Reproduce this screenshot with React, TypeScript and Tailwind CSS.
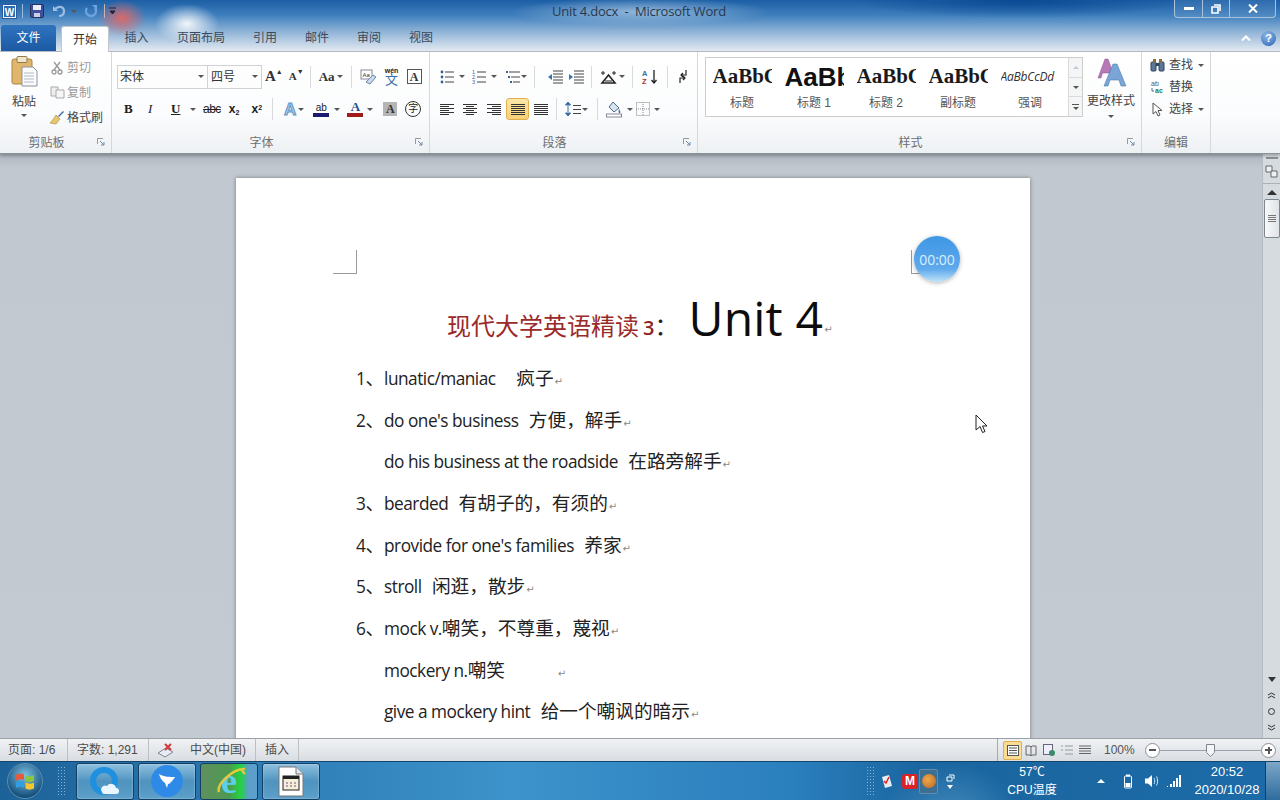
import React from "react";

const cjk = "font-['Liberation_Sans','Noto_Sans_CJK_SC',sans-serif]";

function Caret({ className = "" }: { className?: string }) {
  return <span className={"inline-block w-0 h-0 border-x-[3px] border-x-transparent border-t-[3px] border-t-[#555] " + className} />;
}

function Sep({ className = "" }: { className?: string }) {
  return <span className={"inline-block w-px h-[22px] bg-[#d8dade] " + className} />;
}

function Lines({ kind }: { kind: "l" | "c" | "r" | "j" | "d" }) {
  const rows = [0, 1, 2, 3, 4, 5];
  return (
    <svg width="16" height="13" viewBox="0 0 16 13">
      {rows.map((i) => {
        const short = i % 2 === 1;
        let x1 = 1, x2 = 15;
        if (short && kind === "l") x2 = 10;
        if (short && kind === "c") { x1 = 4; x2 = 12; }
        if (short && kind === "r") x1 = 6;
        return <line key={i} x1={x1} x2={x2} y1={i * 2 + 1.5} y2={i * 2 + 1.5} stroke="#333" strokeWidth="1" />;
      })}
    </svg>
  );
}

function List({ kind }: { kind: "b" | "n" | "m" }) {
  return (
    <svg width="14" height="14" viewBox="0 0 14 14">
      {[2, 7, 12].map((y, i) => (
        <g key={y}>
          {kind === "b" && <circle cx="2" cy={y} r="1.4" fill="#3b5f8f" />}
          {kind === "n" && <text x="0" y={y + 2} fontSize="5.5" fill="#3b5f8f" fontFamily="Liberation Sans">{i + 1}</text>}
          {kind === "m" && <rect x={i * 2} y={y - 1} width="2" height="2" fill="#3b5f8f" />}
          <line x1={kind === "m" ? 3 + i * 2 : 5} x2="14" y1={y} y2={y} stroke="#444" />
        </g>
      ))}
    </svg>
  );
}

function Indent({ flip }: { flip?: boolean }) {
  return (
    <svg width="16" height="14" viewBox="0 0 16 14">
      {[1, 4, 7, 10, 13].map((y) => <line key={y} x1="6" x2="16" y1={y} y2={y} stroke="#444" />)}
      <path d={flip ? "M1 4l4 3-4 3z" : "M5 4l-4 3 4 3z"} fill="#3b72b0" />
    </svg>
  );
}

function Group({ label, w, launcher, children }: { label: string; w: string; launcher?: boolean; children: React.ReactNode }) {
  return (
    <div className={"relative h-full flex flex-col border-r border-[#d5d8dd] " + w}>
      <div className="h-[81px] shrink-0">{children}</div>
      <div className={"flex-1 flex items-center justify-center text-[12px] text-[#6e6e6e] " + (launcher ? "pr-[18px]" : "")}>{label}</div>
      {launcher && (
        <svg className="absolute right-[5px] bottom-[6px]" width="9" height="9" viewBox="0 0 9 9">
          <path d="M0.5 6V0.5H6" fill="none" stroke="#999" />
          <path d="M3 3l4 4M7 4v3H4" fill="none" stroke="#6d8aa8" />
        </svg>
      )}
    </div>
  );
}

function Style({ text, label, cls }: { text: string; label: string; cls: string }) {
  return (
    <div className="w-[72px] flex flex-col items-center overflow-hidden">
      <div className="h-[36px] w-[59px] overflow-hidden flex items-center justify-start whitespace-nowrap">
        <span className={cls}>{text}</span>
      </div>
      <div className="text-[12px] text-[#555] leading-[16px]">{label}</div>
    </div>
  );
}

function EditRow({ icon, label, caret }: { icon: React.ReactNode; label: string; caret?: boolean }) {
  return (
    <div className="h-[22px] flex items-center text-[12px] text-[#444]">
      <span className="w-[17px] flex justify-center mr-[3px]">{icon}</span>
      <span>{label}</span>
      {caret && <Caret className="ml-[5px]" />}
    </div>
  );
}

function ClipRow({ icon, label, dim }: { icon: React.ReactNode; label: string; dim?: boolean }) {
  return (
    <div className={"h-[25px] flex items-center text-[12px] " + (dim ? "text-[#9a9a9a]" : "text-[#444]")}>
      <span className="w-[18px] flex justify-center mr-[1px]">{icon}</span>
      <span>{label}</span>
    </div>
  );
}

function Ret() {
  return <span className="text-[10px] text-[#888] ml-[1px] font-['DejaVu_Sans']">↵</span>;
}

function Row({ children, indent }: { children: React.ReactNode; indent?: boolean }) {
  return (
    <div className={"h-[41.67px] leading-[41.67px] whitespace-pre text-[18.67px] text-[#222] " + (indent ? "pl-[148px]" : "pl-[120px]")}>
      {children}
    </div>
  );
}

function E({ children }: { children: React.ReactNode }) {
  return <span className="text-[17.25px] font-['Open_Sans','Noto_Sans',sans-serif] tracking-[-0.5px]">{children}</span>;
}

function TaskBtn({ children }: { children: React.ReactNode }) {
  return (
    <div className="w-[58px] h-[37px] mr-[4px] rounded-[3px] border border-[#123f63] bg-[linear-gradient(180deg,#8ec0df,#4f93bf_50%,#5b9fca)] flex items-center justify-center shadow-[inset_0_0_2px_#ffffff99]">
      {children}
    </div>
  );
}

function Dots() {
  return <div className="w-[9px] h-[31px] bg-[radial-gradient(circle,#9fc3dc_1px,transparent_1px)] bg-[length:3px_3px] opacity-80" />;
}

export default function App() {
  return (
    <div className={"w-[1280px] h-[800px] overflow-hidden flex flex-col relative bg-[#c0c8d0] " + cjk}>
      {/* title + tabs */}
      <div className="h-[52px] shrink-0 flex flex-col border-b border-[#b8bcc2] bg-[radial-gradient(ellipse_24px_18px_at_122px_18px,#d9696a,transparent),radial-gradient(ellipse_32px_20px_at_187px_24px,#f2f6fa,transparent),radial-gradient(ellipse_130px_14px_at_640px_12px,#a8c5e2cc,transparent),radial-gradient(ellipse_170px_18px_at_1020px_0px,#0a4a94,transparent),linear-gradient(180deg,#1d5fa6_0%,#3f7fbd_30%,#8fb3d6_62%,#e3e9f1_100%)]">
        <div className="h-[25px] flex items-start relative">
          <div className="flex items-center h-[22px] pl-[2px]">
            <svg width="15" height="15" viewBox="0 0 15 15">
              <rect x="0.5" y="0.5" width="14" height="14" fill="#eef4fb" stroke="#2b5d9c" />
              <rect x="2" y="2" width="11" height="11" fill="#2b6cb5" />
              <text x="7.5" y="11.5" textAnchor="middle" fontSize="10" fontWeight="700" fill="#fff" fontFamily="Liberation Sans">W</text>
            </svg>
            <span className="w-px h-[14px] bg-[#9fbad6] ml-[5px]" />
            <svg className="ml-[7px]" width="14" height="14" viewBox="0 0 14 14">
              <rect x="0.5" y="0.5" width="13" height="13" rx="1" fill="#3f4f9c" stroke="#26305f" />
              <rect x="3" y="1" width="8" height="5" fill="#e8eefa" />
              <rect x="4" y="9" width="6" height="4" fill="#c9d0e4" />
            </svg>
            <svg className="ml-[8px]" width="14" height="14" viewBox="0 0 14 14">
              <path d="M3 5c4-4 9-2 9 2s-3 5-5 5" fill="none" stroke="#9dbde3" strokeWidth="2.2" />
              <path d="M1 2v5h5z" fill="#9dbde3" />
            </svg>
            <Caret className="ml-[5px] border-t-[#223]" />
            <svg className="ml-[7px]" width="14" height="14" viewBox="0 0 14 14">
              <path d="M3 4a5 5 0 1 0 8 0" fill="none" stroke="#6ea3e2" strokeWidth="2.4" />
              <path d="M8 1h5v5z" fill="#6ea3e2" />
            </svg>
            <span className="w-px h-[14px] bg-[#c7b5b5] ml-[6px]" />
            <svg className="ml-[4px]" width="7" height="8" viewBox="0 0 7 8"><path d="M0 1h7M1 4h5l-2.500 3z" stroke="#223" fill="#223" /></svg>
          </div>
          <div className="absolute left-[552px] top-[3px] text-[13px] leading-[17px] text-[#27384d] font-['Open_Sans',sans-serif] whitespace-pre tracking-[-0.2px]">Unit 4.docx  -  Microsoft Word</div>
          <div className="ml-auto mr-[4px] w-[102px] h-[18px] flex border border-t-0 border-[#a9c3dc] rounded-b-[4px] bg-[#ffffff14]">
            <div className="w-[28px] flex items-center justify-center border-r border-[#a9c3dc]"><span className="w-[10px] h-[3px] bg-white" /></div>
            <div className="w-[27px] flex items-center justify-center border-r border-[#a9c3dc]">
              <svg width="10" height="10" viewBox="0 0 10 10"><path d="M3 1h6v6M1 3h6v6H1z" fill="none" stroke="#fff" strokeWidth="1.600" /></svg>
            </div>
            <div className="flex-1 flex items-center justify-center">
              <svg width="10" height="9" viewBox="0 0 10 9"><path d="M1 0.500l8 8M9 0.500l-8 8" stroke="#fff" strokeWidth="2" /></svg>
            </div>
          </div>
        </div>
        <div className="h-[26px] flex items-end relative text-[12px]">
          <div className="ml-[1px] w-[55px] h-[26px] rounded-t-[3px] bg-[linear-gradient(180deg,#2f73bf,#1c5aa3)] text-white flex items-center justify-center">文件</div>
          <div className="ml-[5px] w-[48px] h-[26px] relative top-[1px] z-10 rounded-t-[3px] bg-white border border-b-0 border-[#c3c7cd] text-[#333] flex items-center justify-center">开始</div>
          <div className="w-[55px] h-[26px] flex items-center justify-center text-[#3a4a5c]">插入</div>
          <div className="w-[74px] h-[26px] flex items-center justify-center text-[#3a4a5c]">页面布局</div>
          <div className="w-[54px] h-[26px] flex items-center justify-center text-[#3a4a5c]">引用</div>
          <div className="w-[50px] h-[26px] flex items-center justify-center text-[#3a4a5c]">邮件</div>
          <div className="w-[54px] h-[26px] flex items-center justify-center text-[#3a4a5c]">审阅</div>
          <div className="w-[50px] h-[26px] flex items-center justify-center text-[#3a4a5c]">视图</div>
          <div className="ml-auto mr-[4px] h-[26px] flex items-center">
            <svg width="10" height="7" viewBox="0 0 10 7"><path d="M1 5.500l4-4 4 4" fill="none" stroke="#fff" strokeWidth="2" /></svg>
            <span className="ml-[10px] w-[15px] h-[15px] rounded-full bg-[radial-gradient(circle_at_40%_30%,#8db8ea,#2a63b0)] text-white text-[11px] font-bold flex items-center justify-center leading-none">?</span>
          </div>
        </div>
      </div>

      {/* ribbon */}
      <div className="h-[102px] shrink-0 flex bg-[linear-gradient(180deg,#ffffff,#fbfcfd_62%,#eef1f4_100%)] border-b border-[#8d9299] shadow-[0_2px_3px_#00000040] relative z-10">
        <Group label="剪贴板" w="w-[112px]" launcher>
          <div className="flex h-full">
            <div className="w-[48px] flex flex-col items-center pt-[4px]">
              <svg width="27" height="31" viewBox="0 0 27 31">
                <rect x="1" y="3" width="20" height="25" rx="2" fill="#e0b66c" stroke="#a9843f" />
                <rect x="6" y="0.500" width="10" height="6" rx="1" fill="#f0e6cc" stroke="#8f7a4a" />
                <path d="M11 11h11l4 4v15H11z" fill="#fafbfc" stroke="#8d939b" />
                <path d="M13 17h10M13 20h10M13 23h10M13 26h10" stroke="#b5bac2" />
              </svg>
              <div className="text-[12px] text-[#444] mt-[7px] leading-[16px]">粘贴</div>
              <Caret className="mt-[4px]" />
            </div>
            <div className="pt-[3px]">
              <ClipRow dim label="剪切" icon={<svg width="12" height="14" viewBox="0 0 12 14"><path d="M3 1l6 8M9 1L3 9" stroke="#999" strokeWidth="1.300" /><circle cx="3" cy="11" r="2" fill="none" stroke="#999" strokeWidth="1.300" /><circle cx="9" cy="11" r="2" fill="none" stroke="#999" strokeWidth="1.300" /></svg>} />
              <ClipRow dim label="复制" icon={<svg width="15" height="13" viewBox="0 0 15 13"><path d="M1 1h7v9H1z" fill="#eee" stroke="#aaa" /><path d="M6 4h8v8H6z" fill="#f6f6f6" stroke="#aaa" /></svg>} />
              <ClipRow label="格式刷" icon={<svg width="16" height="15" viewBox="0 0 16 15"><path d="M9 6l5-5 1 1-5 5z" fill="#3a6ea5" /><path d="M7 5l4 4-4 5-6-1c2-2 4-5 6-8z" fill="#e8c66a" stroke="#a88a3e" strokeWidth="0.600" /></svg>} />
            </div>
          </div>
        </Group>

        <Group label="字体" w="w-[318px]" launcher>
          <div className="pl-[5px] pt-[12px] flex flex-col">
            <div className="h-[25px] flex items-center">
              <div className="w-[91px] h-[24px] border border-[#cfd3d8] bg-[#fdfdfd] flex items-center text-[12px] text-[#333] pl-[2px]">宋体<Caret className="ml-auto mr-[3px]" /></div>
              <div className="w-[54px] h-[24px] border border-l-0 border-[#cfd3d8] bg-[#fdfdfd] flex items-center text-[12px] text-[#333] pl-[3px]">四号<Caret className="ml-auto mr-[3px]" /></div>
              <span className="ml-[3px] text-[15px] font-bold font-['Liberation_Serif'] text-[#333]">A</span>
              <span className="text-[7px] text-[#333] -mt-[8px]">▲</span>
              <span className="ml-[6px] text-[11px] font-bold font-['Liberation_Serif'] text-[#333]">A</span>
              <span className="text-[7px] text-[#333] -mt-[8px]">▼</span>
              <Sep className="ml-[6px]" />
              <span className="ml-[8px] text-[13px] font-bold font-['Liberation_Serif'] text-[#333]">Aa</span>
              <Caret className="ml-[2px]" />
              <Sep className="ml-[8px]" />
              <svg className="ml-[8px]" width="17" height="16" viewBox="0 0 17 16"><rect x="1" y="1" width="11" height="9" fill="#fff" stroke="#889" /><text x="2.500" y="8" fontSize="6" fill="#333" fontFamily="Liberation Sans">Aa</text><path d="M6 13l7-7 3 2-6 7z" fill="#c9d9ea" stroke="#6d8aa8" /></svg>
              <span className="ml-[7px] w-[16px] flex flex-col items-center relative">
                <span className="text-[7px] leading-[7px] text-[#222] font-bold">wén</span>
                <span className="text-[13px] leading-[12px] text-[#3a6ea5]">文</span>
              </span>
              <span className="ml-[7px] w-[15px] h-[15px] border border-[#555] text-[12px] font-bold font-['Liberation_Serif'] text-[#333] flex items-center justify-center leading-none">A</span>
            </div>
            <div className="h-[24px] mt-[8px] flex items-center text-[#222]">
              <span className="ml-[7px] w-[10px] text-[13px] font-bold font-['Liberation_Serif']">B</span>
              <span className="ml-[14px] w-[10px] text-[13px] italic font-['Liberation_Serif']">I</span>
              <span className="ml-[13px] w-[10px] text-[13px] font-bold underline font-['Liberation_Serif']">U</span>
              <Caret className="ml-[9px]" />
              <span className="ml-[7px] text-[12px] line-through font-['Liberation_Sans'] tracking-[-0.5px]">abc</span>
              <span className="ml-[8px] text-[12px] font-bold">x<sub className="text-[7px]">2</sub></span>
              <span className="ml-[12px] text-[12px] font-bold">x<sup className="text-[7px]">2</sup></span>
              <Sep className="ml-[10px]" />
              <span className="ml-[11px] text-[17px] font-bold text-[#a9cdea] [-webkit-text-stroke:1px_#5e97cb] font-['Liberation_Sans'] leading-none">A</span>
              <Caret className="ml-[2px]" />
              <span className="ml-[9px] w-[16px] flex flex-col items-center text-[10px] leading-[11px] text-[#222]">ab<span className="w-[16px] h-[4px] bg-[#1a1a6e]" /></span>
              <Caret className="ml-[5px]" />
              <span className="ml-[7px] w-[16px] flex flex-col items-center text-[13px] font-bold font-['Liberation_Serif'] leading-[12px] text-[#2b4f8f]">A<span className="w-[16px] h-[4px] bg-[#a01c1c]" /></span>
              <Caret className="ml-[4px]" />
              <span className="ml-[10px] w-[14px] h-[14px] bg-[#b5b5b5] flex items-center justify-center text-[12px] font-bold font-['Liberation_Serif'] text-[#333]">A</span>
              <span className="ml-[8px] w-[16px] h-[16px] rounded-full border border-[#333] text-[10px] flex items-center justify-center leading-none">字</span>
            </div>
          </div>
        </Group>

        <Group label="段落" w="w-[268px]" launcher>
          <div className="pl-[10px] pt-[16px] flex flex-col">
            <div className="h-[17px] flex items-center">
              <List kind="b" /><Caret className="ml-[5px]" />
              <span className="ml-[7px]"><List kind="n" /></span><Caret className="ml-[5px]" />
              <span className="ml-[9px]"><List kind="m" /></span><Caret className="ml-[1px]" />
              <Sep className="ml-[7px]" />
              <span className="ml-[12px]"><Indent /></span>
              <span className="ml-[5px]"><Indent flip /></span>
              <Sep className="ml-[7px]" />
              <svg className="ml-[8px]" width="17" height="14" viewBox="0 0 17 14"><path d="M2 13L8.500 5l6.500 8z" fill="none" stroke="#222" strokeWidth="1.600" /><path d="M1 3h4M12 3h4M3 1v4M14 1v4M5 11h7" stroke="#222" /></svg>
              <Caret className="ml-[2px]" />
              <Sep className="ml-[7px]" />
              <svg className="ml-[9px]" width="16" height="16" viewBox="0 0 16 16"><text x="0" y="7" fontSize="7.500" fontWeight="700" fill="#3a6ea5" fontFamily="Liberation Sans">A</text><text x="0" y="15" fontSize="7.500" fontWeight="700" fill="#b03030" fontFamily="Liberation Sans">Z</text><path d="M12 1v13M9.500 11l2.500 3 2.500-3" fill="none" stroke="#222" strokeWidth="1.300" /></svg>
              <Sep className="ml-[9px]" />
              <svg className="ml-[9px]" width="12" height="15" viewBox="0 0 12 15"><path d="M9 1v5H4M6 4L4 6l2 2" fill="none" stroke="#222" strokeWidth="1.200" /><path d="M3 14V9h5M6 7l2 2-2 2" fill="none" stroke="#222" strokeWidth="1.200" /></svg>
            </div>
            <div className="h-[22px] mt-[13px] flex items-center">
              <span className="-ml-[1px]"><Lines kind="l" /></span>
              <span className="ml-[7px]"><Lines kind="c" /></span>
              <span className="ml-[8px]"><Lines kind="r" /></span>
              <span className="ml-[4px] w-[23px] h-[22px] rounded-[3px] border border-[#e0b050] bg-[linear-gradient(180deg,#fde7a8,#f8cf74)] flex items-center justify-center"><Lines kind="j" /></span>
              <span className="ml-[4px] flex flex-col items-center"><Lines kind="d" /></span>
              <Sep className="ml-[7px]" />
              <svg className="ml-[7px]" width="8" height="16" viewBox="0 0 8 16"><path d="M4 5v6M1.500 4L4 1l2.500 3zM1.500 12L4 15l2.500-3z" fill="#3a6ea5" stroke="#3a6ea5" /></svg>
              <svg className="ml-[1px]" width="8" height="11" viewBox="0 0 8 11"><path d="M0 1.500h8M0 5.500h8M0 9.500h8" stroke="#444" /></svg>
              <Caret className="ml-[1px]" />
              <Sep className="ml-[9px]" />
              <svg className="ml-[8px]" width="17" height="17" viewBox="0 0 17 17"><path d="M7 1l6 6-5 4-5-5z" fill="#d8e4f0" stroke="#4a6a8f" /><path d="M13 8c1 2 2 3 1 4s-2-1-1-4z" fill="#3a6ea5" /><rect x="0.500" y="13" width="15" height="3" fill="#fff" stroke="#889" /></svg>
              <Caret className="ml-[4px]" />
              <svg className="ml-[3px]" width="14" height="14" viewBox="0 0 14 14"><rect x="0.500" y="0.500" width="13" height="13" fill="none" stroke="#888" strokeDasharray="1 1" /><path d="M7 0v14M0 7h14" stroke="#888" strokeDasharray="1 1" /></svg>
              <Caret className="ml-[4px]" />
            </div>
          </div>
        </Group>

        <Group label="样式" w="w-[444px]" launcher>
          <div className="pl-[7px] pt-[5px] flex">
            <div className="w-[378px] h-[60px] border border-[#cfcdca] bg-white flex">
              <div className="flex-1 flex pt-[1px]">
                <Style text="AaBbCc" label="标题" cls="text-[21px] font-bold font-['Liberation_Serif'] text-[#1a1a1a]" />
                <Style text="AaBbC" label="标题 1" cls="text-[26px] font-bold font-['Liberation_Sans'] text-[#111]" />
                <Style text="AaBbCc" label="标题 2" cls="text-[21px] font-bold font-['Liberation_Serif'] text-[#1a1a1a]" />
                <Style text="AaBbCc" label="副标题" cls="text-[21px] font-bold font-['Liberation_Serif'] text-[#1a1a1a]" />
                <Style text="AaBbCcDd" label="强调" cls="text-[12px] italic text-[#333] font-['Open_Sans'] tracking-[-0.2px]" />
              </div>
              <div className="w-[14px] flex flex-col border-l border-[#d8dade] bg-[#f4f5f7]">
                <div className="h-[20px] border-b border-[#d8dade] flex items-center justify-center"><span className="w-0 h-0 border-x-[3px] border-x-transparent border-b-[3px] border-b-[#c5c8cc]" /></div>
                <div className="h-[19px] border-b border-[#d8dade] flex items-center justify-center"><Caret /></div>
                <div className="flex-1 flex flex-col gap-[2px] items-center justify-center"><span className="w-[7px] h-px bg-[#555]" /><Caret /></div>
              </div>
            </div>
            <div className="w-[58px] flex flex-col items-center ml-[-1px]">
              <svg width="32" height="31" viewBox="0 0 32 31">
                <path d="M3 21L10 2h3l7 19h-4l-1.500-5h-7L6 21z" fill="#b778b8" stroke="#8d4f90" strokeWidth="0.500" />
                <path d="M9 29L18 7h4l9 22h-5l-2-6h-9l-2 6z" fill="#7aa5d6" stroke="#3f6ea5" strokeWidth="0.500" />
              </svg>
              <div className="text-[12px] text-[#444] mt-[5px] leading-[16px] whitespace-nowrap">更改样式</div>
              <Caret className="mt-[6px]" />
            </div>
          </div>
        </Group>

        <Group label="编辑" w="w-[69px]">
          <div className="pl-[7px] pt-[2px]">
            <EditRow label="查找" caret icon={<svg width="15" height="14" viewBox="0 0 15 14"><rect x="1" y="4" width="5" height="9" rx="1" fill="#5b7896" stroke="#2d4560" /><rect x="9" y="4" width="5" height="9" rx="1" fill="#5b7896" stroke="#2d4560" /><rect x="3" y="1" width="3" height="4" fill="#8b6b3a" /><rect x="9" y="1" width="3" height="4" fill="#8b6b3a" /><rect x="6" y="5" width="3" height="3" fill="#2d4560" /></svg>} />
            <EditRow label="替换" icon={<svg width="15" height="14" viewBox="0 0 15 14"><text x="1" y="6" fontSize="7" fill="#555" fontFamily="Liberation Sans">ab</text><text x="5" y="13" fontSize="7" fontWeight="700" fill="#2f7a4a" fontFamily="Liberation Sans">ac</text><path d="M2 8v3h2" fill="none" stroke="#3a6ea5" /></svg>} />
            <EditRow label="选择" caret icon={<svg width="11" height="15" viewBox="0 0 11 15"><path d="M1 1v11l3-2.500 2 4.500 2-1-2-4.500h4z" fill="#fff" stroke="#555" /></svg>} />
          </div>
        </Group>
      </div>

      {/* document */}
      <div className="flex-1 min-h-0 flex bg-[linear-gradient(180deg,#aeb6bf_0,#c1c8cf_14px,#c3cad1_100%)]">
        <div className="flex-1 pt-[24px] pl-[236px] overflow-hidden">
          <div className="w-[794px] h-[700px] bg-white shadow-[0_0_4px_#00000066] flex flex-col">
            <div className="pt-[72px] px-[97px] flex justify-between">
              <div className="w-[24px] h-[24px] border-r border-b border-[#9a9a9a]" />
              <div className="w-[24px] h-[24px] border-l border-b border-[#9a9a9a] mr-[-2px]" />
            </div>
            <div className="h-[63px] mt-[9px] pl-[211px] flex items-end whitespace-pre">
              <span className="text-[24px] text-[#9b2a2a] leading-[38px]">现代大学英语精读</span>
              <span className="text-[20px] font-semibold text-[#8f2323] leading-[36px] ml-[4px] font-['Open_Sans']">3</span>
              <span className="text-[24px] text-[#222] leading-[38px] w-[34px]">：</span>
              <span className="text-[48px] leading-[56px] text-[#0c0c0c] font-['Open_Sans'] tracking-[0.2px]">Unit 4</span>
              <span className="leading-[32px]"><Ret /></span>
            </div>
            <div className="mt-[12px]">
              <Row><E>1</E>、<E>lunatic/maniac</E>    疯子<Ret /></Row>
              <Row><E>2</E>、<E>do one's business</E>  方便，解手<Ret /></Row>
              <Row indent><E>do his business at the roadside</E>  在路旁解手<Ret /></Row>
              <Row><E>3</E>、<E>bearded</E>  有胡子的，有须的<Ret /></Row>
              <Row><E>4</E>、<E>provide for one's families</E>  养家<Ret /></Row>
              <Row><E>5</E>、<E>stroll</E>  闲逛，散步<Ret /></Row>
              <Row><E>6</E>、<E>mock v.</E>嘲笑，不尊重，蔑视<Ret /></Row>
              <Row indent><E>mockery n.</E>嘲笑          <Ret /></Row>
              <Row indent><E>give a mockery hint</E>  给一个嘲讽的暗示<Ret /></Row>
            </div>
          </div>
        </div>
        <div className="w-[18px] shrink-0 flex flex-col items-center bg-[#d6dbe0] border-l border-[#b6bcc3]">
          <span className="mt-[3px] w-[12px] h-[2px] bg-[#8a9098]" />
          <svg className="mt-[6px]" width="13" height="13" viewBox="0 0 13 13"><path d="M1 1h6v6H1z" fill="#eef0f3" stroke="#666" /><path d="M6 6h6v6H6z" fill="#eef0f3" stroke="#666" /></svg>
          <span className="mt-[5px] w-full h-px bg-[#aab0b7]" />
          <span className="mt-[6px] w-0 h-0 border-x-[5px] border-x-transparent border-b-[5px] border-b-[#333]" />
          <div className="mt-[4px] w-[16px] h-[39px] rounded-[2px] border border-[#7f868e] bg-[linear-gradient(90deg,#f8f9fa,#dfe3e8)] flex flex-col gap-[1px] items-center justify-center">
            <span className="w-[8px] h-px bg-[#777]" /><span className="w-[8px] h-px bg-[#777]" /><span className="w-[8px] h-px bg-[#777]" /><span className="w-[8px] h-px bg-[#777]" />
          </div>
          <div className="flex-1" />
          <span className="w-0 h-0 border-x-[4px] border-x-transparent border-t-[5px] border-t-[#333] mb-[10px]" />
          <svg className="mb-[9px]" width="9" height="7" viewBox="0 0 9 7"><path d="M1 3l3.500-2L8 3M1 6l3.500-2L8 6" fill="none" stroke="#333" /></svg>
          <span className="w-[7px] h-[7px] rounded-full border border-[#333] mb-[9px]" />
          <svg className="mb-[7px]" width="9" height="7" viewBox="0 0 9 7"><path d="M1 1l3.500 2L8 1M1 4l3.500 2L8 4" fill="none" stroke="#333" /></svg>
        </div>
      </div>

      {/* status bar */}
      <div className="h-[23px] shrink-0 flex items-center border-t border-[#9aa0a7] bg-[linear-gradient(180deg,#f0f2f4,#d9dde2)] text-[12px] text-[#4b4b4b]">
        <div className="w-[68px] pl-[8px] h-full flex items-center border-r border-[#bcc0c5]">页面: 1/6</div>
        <div className="w-[81px] pl-[9px] h-full flex items-center border-r border-[#bcc0c5]">字数: 1,291</div>
        <div className="w-[107px] pl-[8px] h-full flex items-center border-r border-[#bcc0c5]">
          <svg width="18" height="15" viewBox="0 0 18 15"><path d="M1 10l8-5 7 4-8 5z" fill="#e8ecf2" stroke="#7a8798" /><path d="M8 1l6 6M14 1L8 7" stroke="#d23a3a" strokeWidth="2" /></svg>
          <span className="ml-[15px]">中文(中国)</span>
        </div>
        <div className="w-[43px] pl-[9px] h-full flex items-center border-r border-[#bcc0c5]">插入</div>
        <div className="flex-1" />
        <div className="h-full w-[283px] flex items-center border-l border-[#a5aab0]">
          <span className="ml-[5px] w-[19px] h-[19px] rounded-[2px] border border-[#e0b050] bg-[#fbdc94] flex items-center justify-center">
            <svg width="12" height="11" viewBox="0 0 12 11"><rect x="0.500" y="0.500" width="11" height="10" fill="#fff" stroke="#555" /><path d="M2 3h8M2 5.500h8M2 8h8" stroke="#555" /></svg>
          </span>
          <svg className="ml-[3px]" width="12" height="11" viewBox="0 0 12 11"><path d="M1 1h4l1 1 1-1h4v9H7l-1 1-1-1H1zM6 2v8" fill="none" stroke="#666" /></svg>
          <svg className="ml-[6px]" width="12" height="12" viewBox="0 0 12 12"><rect x="0.500" y="0.500" width="9" height="10" fill="#eef" stroke="#667" /><circle cx="9" cy="9" r="3" fill="#3a8a6a" /></svg>
          <svg className="ml-[6px]" width="12" height="10" viewBox="0 0 12 10"><path d="M4 1h8M4 5h8M4 9h8M0 1h2M0 5h2" stroke="#999" /></svg>
          <svg className="ml-[6px]" width="12" height="10" viewBox="0 0 12 10"><path d="M0 1h12M0 3.500h12M0 6h12M0 8.500h12" stroke="#666" /></svg>
          <span className="ml-[13px] w-[31px] text-[#555]">100%</span>
          <span className="ml-[10px] w-[15px] h-[15px] rounded-full border border-[#8a9098] bg-white flex items-center justify-center"><span className="w-[7px] h-[2px] bg-[#555]" /></span>
          <div className="w-[101px] h-px bg-[#9aa0a7] relative">
            <svg className="absolute left-[46px] -top-[6px]" width="9" height="13" viewBox="0 0 9 13"><path d="M0.500 0.500h8v8l-4 4-4-4z" fill="#f3f5f7" stroke="#7f868e" /></svg>
          </div>
          <span className="w-[15px] h-[15px] rounded-full border border-[#8a9098] bg-white flex items-center justify-center relative">
            <span className="w-[7px] h-[2px] bg-[#555]" />
            <span className="absolute w-[2px] h-[7px] bg-[#555]" />
          </span>
        </div>
      </div>

      {/* taskbar */}
      <div className="h-[39px] shrink-0 flex items-center border-t border-[#11466f] bg-[radial-gradient(ellipse_70px_60px_at_950px_60px,#6fb2dc80,transparent),linear-gradient(90deg,#1c6298,#2c7bb4_20%,#3d93cb_40%,#2a7fbd_62%,#1a659f_72%,#1c6ba8_100%)]">
        <div className="w-[46px] flex justify-center pl-[4px]">
          <div className="w-[36px] h-[36px] rounded-full border border-[#5d8eb0] bg-[radial-gradient(circle_at_50%_35%,#7fc2e5,#134f7a_75%)] flex items-center justify-center">
            <svg width="20" height="19" viewBox="0 0 20 19">
              <path d="M1 3c3-2 6-2 8-.5V8C7 7 4 7 1 8.500z" fill="#e8583a" />
              <path d="M10.500 3c3 2 6 1.500 8.500 0v6c-3 1.500-6 1.500-8.500 0z" fill="#8cc63f" />
              <path d="M1 10c3-1.500 6-1.500 8 0v6c-2-1.500-5-1.500-8 0z" fill="#2f9fe0" />
              <path d="M10.500 10.500c3 1.500 6 1.500 8.500 0v6c-3 1.500-6 1.500-8.500 0z" fill="#f7c531" />
            </svg>
          </div>
        </div>
        <div className="ml-[11px] mr-[10px]"><Dots /></div>
        <TaskBtn>
          <svg width="34" height="32" viewBox="0 0 34 32">
            <circle cx="16" cy="16" r="11" fill="none" stroke="#1f8fe0" strokeWidth="6" />
            <path d="M14 27a4 4 0 0 1 5-6 5 5 0 0 1 9 2 3 3 0 0 1 0 6H16a2 2 0 0 1-2-2z" fill="#eaf6ff" />
          </svg>
        </TaskBtn>
        <TaskBtn>
          <span className="w-[32px] h-[32px] rounded-full bg-[#2e8ae6] flex items-center justify-center">
            <svg width="20" height="20" viewBox="0 0 20 20"><path d="M2 3c5 3 11 3 16 3-1 2-2 3-3 3l1 1-3 1 1 1-3 1-1 4-2-5C5 10 3 7 2 3z" fill="#fff" /></svg>
          </span>
        </TaskBtn>
        <div className="w-[58px] h-[37px] mr-[4px] rounded-[3px] border border-[#123f63] bg-[linear-gradient(90deg,#5f8f5f,#4e9a50_50%,#22d33f_70%,#5b9fca_85%)] flex items-center justify-center">
          <span className="text-[36px] leading-none text-[#5cd0e8] font-['Liberation_Serif'] font-bold relative">
            e
            <svg className="absolute -left-[5px] top-[3px]" width="32" height="30" viewBox="0 0 32 30"><path d="M3 26C0 18 18 2 29 3c-6-1-2 3 0 5" fill="none" stroke="#e8c73c" strokeWidth="2.400" /></svg>
          </span>
        </div>
        <TaskBtn>
          <svg width="26" height="31" viewBox="0 0 26 31">
            <path d="M1 1h17l7 7v22H1z" fill="#fff" stroke="#777" />
            <path d="M18 1v7h7" fill="#e5e8ec" stroke="#777" />
            <rect x="5" y="10" width="16" height="14" fill="#f5efd8" stroke="#222" />
            <rect x="5" y="10" width="16" height="3" fill="#222" />
            <path d="M8 17h2M12 17h2M16 17h2M8 20h2M12 20h2M16 20h2" stroke="#7a4a9a" />
          </svg>
        </TaskBtn>
        <div className="flex-1" />
        <div className="mr-[6px]"><Dots /></div>
        <svg className="mr-[9px]" width="12" height="15" viewBox="0 0 12 15"><path d="M1 3l7-2 3 11-7 2z" fill="#e8edf4" /><path d="M3 7l2 2 3-6" fill="none" stroke="#d22" strokeWidth="1.500" /></svg>
        <span className="w-[16px] h-[15px] rounded-[3px] bg-[#d8232a] text-white text-[12px] font-bold flex items-center justify-center font-['Liberation_Sans'] mr-[1px]">M</span>
        <span className="w-[19px] h-[25px] rounded-[2px] border border-[#5e8db0] bg-[#3d6f92] flex items-center justify-center mr-[5px]">
          <span className="w-[14px] h-[14px] rounded-full bg-[radial-gradient(circle_at_40%_40%,#f2a74e,#b5651d)]" />
        </span>
        <div className="w-[14px] flex flex-col items-center gap-[3px]">
          <svg width="9" height="8" viewBox="0 0 9 8"><path d="M3 1h5v4M1 3h5v4H1z" fill="none" stroke="#fff" /></svg>
          <span className="w-0 h-0 border-x-[3px] border-x-transparent border-t-[4px] border-t-white" />
        </div>
        <div className="w-[104px] ml-[18px] pl-[10px] flex flex-col items-center text-[12px] leading-[18px] text-white">
          <span>57℃</span>
          <span>CPU温度</span>
        </div>
        <span className="ml-[18px] w-0 h-0 border-x-[4px] border-x-transparent border-b-[4px] border-b-white" />
        <svg className="ml-[19px]" width="8" height="15" viewBox="0 0 8 15"><rect x="0.500" y="2" width="7" height="12" rx="1" fill="none" stroke="#fff" /><rect x="2" y="0.500" width="4" height="2" fill="#fff" /><rect x="1.500" y="9" width="5" height="4" fill="#fff" /></svg>
        <svg className="ml-[12px]" width="15" height="14" viewBox="0 0 15 14"><path d="M1 4.500h3L8 1v12L4 9.500H1z" fill="#fff" /><path d="M10 4c1 2 1 4 0 6M12.500 2.500c1.500 3 1.500 6 0 9" fill="none" stroke="#cfe6f5" /></svg>
        <svg className="ml-[7px]" width="15" height="13" viewBox="0 0 15 13"><path d="M1 11h1v1H1zM4 9h2v3H4zM7 6h2v6H7zM10 3h2v9h-2zM13 0h2v12h-2z" fill="#fff" /></svg>
        <div className="w-[76px] ml-[8px] flex flex-col items-center text-[13px] leading-[18px] text-white whitespace-nowrap">
          <span>20:52</span>
          <span>2020/10/28</span>
        </div>
        <div className="w-[15px] h-full border-l border-[#0f3f66] bg-[linear-gradient(180deg,#7ea6c7,#2d6c9e)]" />
      </div>

      {/* floating timer */}
      <div className="absolute left-[914px] top-[236px] w-[46px] h-[46px] rounded-full bg-[linear-gradient(180deg,#3f97e4_0%,#5fa9ec_72%,#bfe3f8_100%)] shadow-[0_1px_4px_#0000004d] flex items-center justify-center text-[#d9eefc] text-[14px] font-['Open_Sans']">00:00</div>

      {/* pointer */}
      <svg className="absolute left-[975px] top-[414px]" width="13" height="20" viewBox="0 0 13 20">
        <path d="M1 1v15l4-3.500 2.500 6 2.500-1-2.500-5.500H12z" fill="#fff" stroke="#222" />
      </svg>
    </div>
  );
}
